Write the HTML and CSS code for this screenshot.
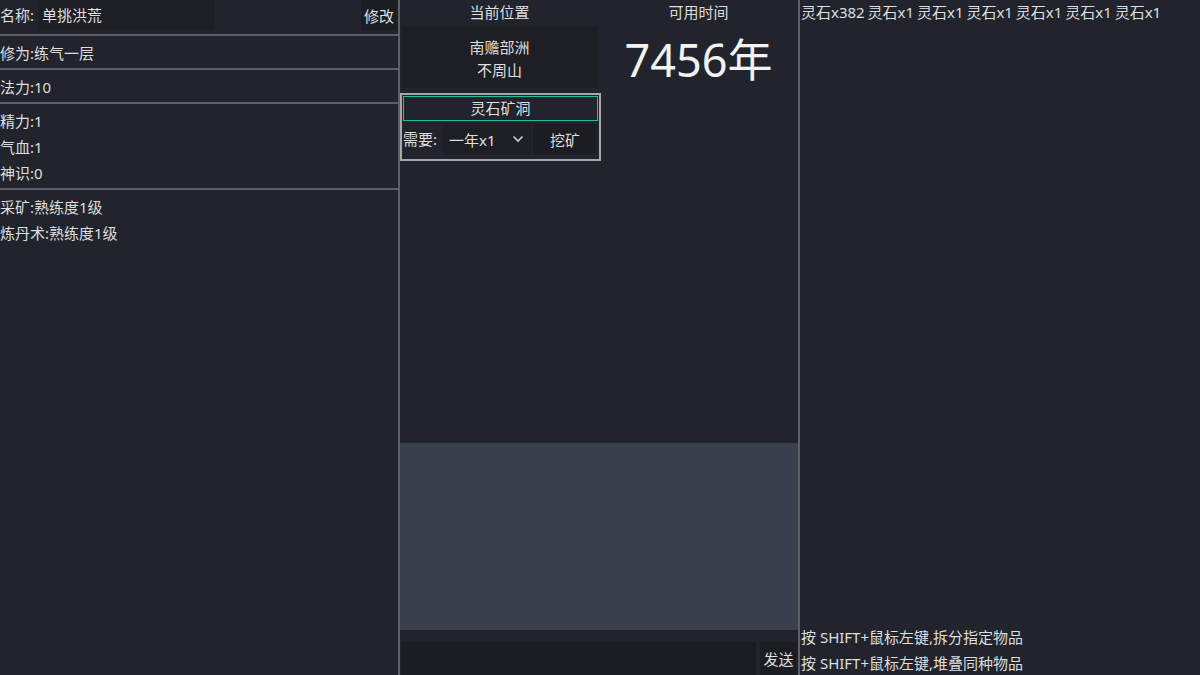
FILE: index.html
```html
<!DOCTYPE html>
<html lang="zh">
<head>
    <meta charset="UTF-8">
    <meta name="viewport" content="width=device-width, initial-scale=1.0">
    <title>修仙</title>
    <link rel="stylesheet" href="styles.css">
</head>
<body>
    <div id="game">
        <!-- 角色属性 -->
        <div class="col-left">
            <div class="name-row">
                <span class="name-label">名称:</span>
                <div class="name-input">单挑洪荒</div>
                <div class="btn btn-edit">修改</div>
            </div>
            <div class="hsep"></div>
            <div class="stat">修为:练气一层</div>
            <div class="hsep"></div>
            <div class="stat">法力:10</div>
            <div class="hsep"></div>
            <div class="stat">精力:1</div>
            <div class="stat">气血:1</div>
            <div class="stat">神识:0</div>
            <div class="hsep"></div>
            <div class="stat">采矿:熟练度1级</div>
            <div class="stat">炼丹术:熟练度1级</div>
        </div>

        <div class="vsep"></div>

        <!-- 地图与行动 -->
        <div class="col-mid">
            <div class="top-info">
                <div class="half">
                    <div class="title">当前位置</div>
                    <div class="location">
                        <div>南赡部洲</div>
                        <div>不周山</div>
                    </div>
                    <div class="place-panel">
                        <div class="place-name">灵石矿洞</div>
                        <div class="place-row">
                            <span class="need">需要:</span>
                            <div class="select">
                                <span>一年x1</span>
                                <svg width="12" height="8" viewBox="0 0 12 8">
                                    <polyline points="1.5,1.5 6,6 10.5,1.5" fill="none" stroke="#cfcfcf" stroke-width="1.6"/>
                                </svg>
                            </div>
                            <div class="btn btn-mine">挖矿</div>
                        </div>
                    </div>
                </div>
                <div class="half">
                    <div class="title">可用时间</div>
                    <div class="time">7456年</div>
                </div>
            </div>
            <div class="spacer"></div>
            <div class="log"></div>
            <div class="chat-row">
                <div class="chat-input"></div>
                <div class="btn btn-send">发送</div>
            </div>
        </div>

        <div class="vsep"></div>

        <!-- 背包 -->
        <div class="col-right">
            <div class="bag">灵石x382 灵石x1 灵石x1 灵石x1 灵石x1 灵石x1 灵石x1</div>
            <div class="spacer"></div>
            <div class="tips">
                <div>按 SHIFT+鼠标左键,拆分指定物品</div>
                <div>按 SHIFT+鼠标左键,堆叠同种物品</div>
            </div>
        </div>
    </div>
</body>
</html>
```

FILE: styles.css
```css
body {
    margin: 0;
    background-color: #21242c;
    color: #dfdfdf;
    font-family: "Noto Sans", "Noto Sans CJK SC", sans-serif;
    font-size: 15px;
    overflow: hidden;
}
#game {
    display: flex;
    height: 675px;
}
.vsep {
    width: 2px;
    background-color: #5c5f65;
}
.hsep {
    height: 2px;
    margin: 2px 0 4px;
    background-color: #5c5f65;
}
.btn {
    background-color: #1c1d22;
    display: flex;
    align-items: center;
    justify-content: center;
}

/* 左栏 */
.col-left {
    width: 398px;
    display: flex;
    flex-direction: column;
}
.name-row {
    height: 32px;
    display: flex;
    align-items: flex-start;
}
.name-label {
    width: 38px;
    line-height: 30px;
}
.name-input {
    width: 173px;
    height: 30px;
    line-height: 30px;
    padding-left: 4px;
    background-color: #1e1f25;
}
.btn-edit {
    margin-left: auto;
    width: 36px;
    height: 30px;
    margin-right: 1px;
}
.stat {
    height: 26px;
    line-height: 26px;
}

/* 中栏 */
.col-mid {
    width: 398px;
    display: flex;
    flex-direction: column;
}
.top-info {
    display: flex;
}
.half {
    width: 199px;
    display: flex;
    flex-direction: column;
    align-items: center;
}
.half:first-child {
    align-items: stretch;
}
.title {
    height: 26px;
    line-height: 24px;
    text-align: center;
}
.location {
    margin: 0 2px;
    height: 52px;
    padding: 10px 0 0;
    background-color: #1e1f25;
    text-align: center;
    line-height: 23px;
}
.place-panel {
    margin-top: 5px;
    width: 201px;
    height: 68px;
    border: 2px solid #a8a8aa;
    padding: 1px;
    box-sizing: border-box;
}
.place-name {
    height: 25px;
    line-height: 23px;
    text-align: center;
    border: 1.5px solid #22c0a0;
    box-sizing: border-box;
}
.place-row {
    margin-top: 3px;
    display: flex;
    height: 30px;
}
.need {
    width: 40px;
    line-height: 30px;
}
.select {
    width: 88px;
    background-color: #1e1f25;
    display: flex;
    align-items: center;
    justify-content: space-between;
    padding: 0 7px 0 6px;
    box-sizing: border-box;
}
.btn-mine {
    margin-left: 2px;
    width: 64px;
}
.time {
    font-size: 45px;
    line-height: 48px;
    margin-top: 10px;
    color: #f2f2f2;
}
.spacer {
    flex: 1;
}
.log {
    height: 187px;
    background-color: #3a404c;
    margin-bottom: 12px;
}
.chat-row {
    display: flex;
    height: 33px;
    gap: 4px;
}
.chat-input {
    flex: 1;
    margin-left: 1px;
    background-color: #1c1d22;
}
.btn-send {
    width: 37px;
    margin-right: 1px;
}

/* 右栏 */
.col-right {
    flex: 1;
    display: flex;
    flex-direction: column;
    padding-left: 1px;
}
.bag {
    line-height: 24px;
    word-spacing: -1px;
}
.tips {
    line-height: 26px;
    margin-bottom: -1px;
}
```
